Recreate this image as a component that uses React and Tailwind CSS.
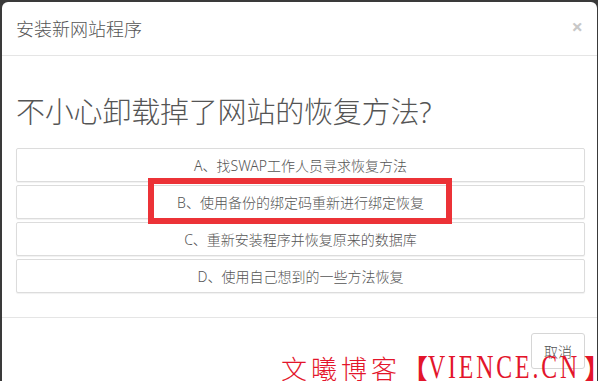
export default function App() {
  const options = [
    "A、找SWAP工作人员寻求恢复方法",
    "B、使用备份的绑定码重新进行绑定恢复",
    "C、重新安装程序并恢复原来的数据库",
    "D、使用自己想到的一些方法恢复",
  ];

  return (
    <div
      className="relative w-[598px] h-[381px] overflow-hidden bg-[#3a3a3a] pt-[2px] pl-[2px] text-[#555]"
      style={{ fontFamily: '"Noto Sans", "Noto Sans CJK SC", sans-serif' }}
    >
      <div className="w-[595px] h-[420px] bg-white rounded-md">
        <div className="h-[54px] pl-[14px] pr-[14px] flex items-center justify-between border-b border-[#e5e5e5]">
          <h4 className="text-[18px] leading-none font-light text-[#555]">安装新网站程序</h4>
          <span className="text-[20px] leading-none font-bold text-[#c8c8c8] -mt-[4px]">×</span>
        </div>

        <div className="pl-[14px] pr-[12px] pb-[24px]">
          <h1 className="mt-[38px] mb-[18px] text-[29px] leading-[36px] font-light text-[#555] tracking-[-0.2px]">
            不小心卸载掉了网站的恢复方法?
          </h1>
          <div className="flex flex-col gap-[3px]">
            {options.map((o) => (
              <button
                key={o}
                className="w-[569px] h-[34px] bg-white border border-[#dcdcdc] rounded-[2px] shadow-[0_1px_1px_rgba(0,0,0,0.06)] text-[14px] font-light text-[#555] flex items-center justify-center"
              >
                {o}
              </button>
            ))}
          </div>
        </div>

        <div className="border-t border-[#e5e5e5] pt-[15px] pr-[12px] flex justify-end">
          <button className="w-[54px] h-[36px] border border-[#d6d6d6] rounded-[3px] bg-white text-[14px] font-light text-[#555]">
            取消
          </button>
        </div>
      </div>

      <div className="absolute left-[148px] top-[178px] w-[304px] h-[46px] border-[6px] border-[#ec3237]" />

      <div className="absolute left-[281px] top-[351px] flex items-center text-[#e3152b] leading-none whitespace-nowrap">
        <span
          className="text-[26px] tracking-[4px] font-light"
          style={{ fontFamily: '"Noto Sans CJK SC", serif' }}
        >
          文曦博客
        </span>
        <span
          className="text-[27px] font-bold"
          style={{ fontFamily: '"Noto Sans CJK SC", serif' }}
        >
          【
        </span>
        <span className="inline-block w-[156px] overflow-visible">
          <span
            className="inline-block origin-left scale-x-[0.72] text-[33px] tracking-[4px] leading-none"
            style={{ fontFamily: '"Liberation Serif", serif' }}
          >
            VIENCE.CN
          </span>
        </span>
        <span
          className="text-[27px] font-bold"
          style={{ fontFamily: '"Noto Sans CJK SC", serif' }}
        >
          】
        </span>
      </div>
    </div>
  );
}
